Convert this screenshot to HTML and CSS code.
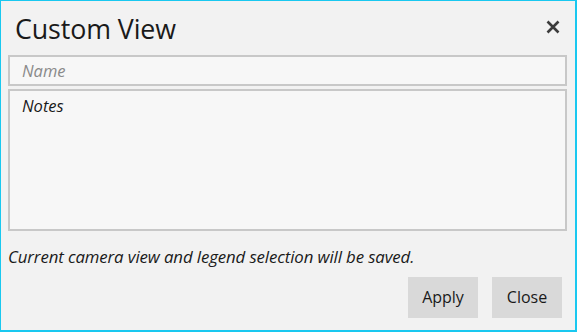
FILE: index.html
```html
<!DOCTYPE html>
<html>
<head>
<meta charset="utf-8">
<link rel="stylesheet" href="styles.css">
</head>
<body>
<div class="dialog">
  <div class="header">
    <h1 class="title">Custom View</h1>
    <button class="close-x" aria-label="Close">
      <svg width="14" height="14" viewBox="0 0 14 14"><path d="M1.5 1.5 L12.5 12.5 M12.5 1.5 L1.5 12.5" stroke="#3c3c3c" stroke-width="2.6" fill="none"/></svg>
    </button>
  </div>
  <div class="field name-field"><span class="placeholder">Name</span></div>
  <div class="field notes-field"><span class="notes-text">Notes</span></div>
  <p class="info">Current camera view and legend selection will be saved.</p>
  <div class="actions">
    <button class="btn">Apply</button>
    <button class="btn">Close</button>
  </div>
</div>
</body>
</html>
```

FILE: styles.css
```css
html, body {
  margin: 0;
  padding: 0;
}
body {
  width: 577px;
  height: 332px;
  font-family: "Open Sans", "Noto Sans", sans-serif;
  background: #f2f2f2;
}
.dialog {
  box-sizing: border-box;
  width: 577px;
  height: 332px;
  border-style: solid;
  border-color: #19c8f0;
  border-width: 1px 2px 2px 1px;
  background: #f2f2f2;
  padding: 0 7px 0 7px;
  display: flex;
  flex-direction: column;
}
.header {
  height: 54px;
  display: flex;
  align-items: center;
  justify-content: space-between;
}
.title {
  margin: 0 0 0 7px;
  font-weight: normal;
  font-size: 26.8px;
  color: #1a1a1a;
  letter-spacing: -0.1px;
}
.close-x {
  border: none;
  background: transparent;
  padding: 0;
  margin-right: 8px;
  width: 14px;
  height: 14px;
  display: flex;
  position: relative;
  top: -1px;
}
.field {
  box-sizing: border-box;
  border: 2px solid #c8c8c8;
  background: #f7f7f7;
  font-style: italic;
  font-size: 16.5px;
  padding-left: 12px;
  margin-right: 1px;
}
.name-field {
  height: 31px;
  display: flex;
  align-items: center;
}
.placeholder {
  color: #8a8a8a;
}
.notes-field {
  margin-top: 3px;
  height: 142px;
  padding-top: 3px;
}
.notes-text {
  color: #1a1a1a;
}
.info {
  margin: 14px 0 0 0;
  font-style: italic;
  font-size: 16.8px;
  color: #1a1a1a;
  letter-spacing: -0.1px;
}
.actions {
  margin-top: 9px;
  display: flex;
  justify-content: flex-end;
  gap: 14px;
  padding-right: 6px;
}
.btn {
  width: 70px;
  height: 41px;
  border: none;
  background: #d9d9d9;
  font-family: "Open Sans", "Noto Sans", sans-serif;
  font-size: 16px;
  color: #1a1a1a;
  padding: 0 0 2px 0;
}
```
